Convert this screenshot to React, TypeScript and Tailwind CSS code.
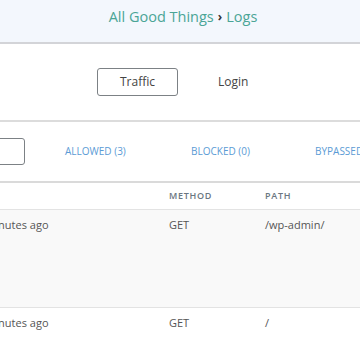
import React from "react";

const rows = [
  { time: "3 minutes ago", method: "GET", path: "/wp-admin/", open: true },
  { time: "5 minutes ago", method: "GET", path: "/", open: false },
];

export default function App() {
  return (
    <div className="w-[360px] h-[360px] overflow-hidden bg-white text-[#555] font-['Open_Sans',sans-serif]">
      <div className="h-[44px] bg-[#f3f7fd] border-b-2 border-[#d3d4d8] flex items-start pt-[7px] pl-[6px] justify-center text-[14.5px] leading-[20px] text-[#4aa596]">
        <span>All Good Things</span>
        <span className="mx-[4px] text-[#333] font-bold text-[12px]">›</span>
        <span>Logs</span>
      </div>

      <div className="h-[76px] flex items-center pl-[97px] gap-[40px] text-[12px] text-[#444]">
        <button className="w-[81px] h-[28px] border border-[#7c8185] rounded-[3px]">Traffic</button>
        <button className="w-[28px]">Login</button>
      </div>

      <div className="border-t-2 border-[#dcdcdc]">
        <div className="ml-[-160px] w-[600px]">
          <div className="h-[59px] flex items-center">
            <div className="w-[185px] h-[27px] border border-[#7c8185] rounded-[3px]" />
            <div className="flex text-[10px] text-[#5b9bd5] uppercase">
              <span className="ml-[40px] w-[126px]">Allowed (3)</span>
              <span className="w-[124px]">Blocked (0)</span>
              <span>Bypassed (0)</span>
            </div>
          </div>
          <div className="border-t-2 border-[#dadada] h-[28px] flex items-center text-[9px] font-semibold tracking-[0.7px] text-[#6a7681]">
            <span className="ml-[329px] w-[96px]">METHOD</span>
            <span>PATH</span>
          </div>
          {rows.map((r, i) => (
            <div
              key={i}
              className={`border-t border-[#e3e3e3] flex items-start pt-[7px] text-[11px] text-[#555] ${
                r.open ? "h-[98px] bg-[#f9f9f9]" : "h-[60px]"
              }`}
            >
              <span className="w-[329px] pl-[136px]">{r.time}</span>
              <span className="w-[96px]">{r.method}</span>
              <span>{r.path}</span>
            </div>
          ))}
        </div>
      </div>
    </div>
  );
}
